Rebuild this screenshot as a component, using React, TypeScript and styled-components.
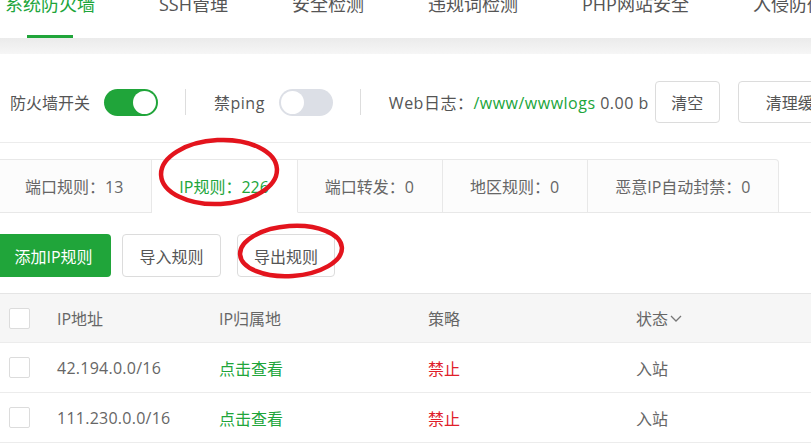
import React from "react";
import styled, { createGlobalStyle } from "styled-components";

const GlobalStyle = createGlobalStyle`
  html, body {
    margin: 0;
    padding: 0;
    background: #ffffff;
    overflow: hidden;
  }
  body {
    font-family: "Open Sans", "Noto Sans CJK SC", sans-serif;
    color: #666;
  }
`;

const topTabs = ["系统防火墙", "SSH管理", "安全检测", "违规词检测", "PHP网站安全", "入侵防御"];

const ruleTabs = [
  { label: "端口规则：13" },
  { label: "IP规则：226", active: true },
  { label: "端口转发：0" },
  { label: "地区规则：0" },
  { label: "恶意IP自动封禁：0" },
];

const rows = [
  { ip: "42.194.0.0/16", area: "点击查看", policy: "禁止", dir: "入站" },
  { ip: "111.230.0.0/16", area: "点击查看", policy: "禁止", dir: "入站" },
];

const App = () => {
  return (
    <Page>
      <GlobalStyle />
      <TopBar>
        <TopTabList>
          {topTabs.map((t, i) => (
            <TopTab key={t} $active={i === 0}>
              {t}
            </TopTab>
          ))}
        </TopTabList>
      </TopBar>
      <Shade />

      <SwitchRow>
        <Label>防火墙开关</Label>
        <Toggle $on />
        <Divider />
        <Label $spacing={0.5}>禁ping</Label>
        <Toggle />
        <Divider />
        <Label $spacing={0.5}>
          Web日志：<Green>/www/wwwlogs</Green> 0.00 b
        </Label>
        <Button $h={42} $w={65}>清空</Button>
        <Button $h={42} $w={120} $ml={18}>清理缓存</Button>
      </SwitchRow>

      <RuleTabs>
        {ruleTabs.map((t) => (
          <RuleTab key={t.label} $active={t.active}>
            {t.label}
          </RuleTab>
        ))}
      </RuleTabs>

      <Actions>
        <PrimaryButton>添加IP规则</PrimaryButton>
        <Button $h={43} $w={99} $ml={11}>导入规则</Button>
        <Button $h={43} $w={98} $ml={16}>导出规则</Button>
      </Actions>

      <Table>
        <HeadRow>
          <Cell>
            <Check />
          </Cell>
          <Cell>IP地址</Cell>
          <Cell>IP归属地</Cell>
          <Cell>策略</Cell>
          <Cell>
            状态
            <svg width="14" height="10" viewBox="0 0 14 10" style={{ marginLeft: 1 }}>
              <polyline points="2,3 7,8 12,3" fill="none" stroke="#777" strokeWidth="1.3" />
            </svg>
          </Cell>
        </HeadRow>
        {rows.map((r) => (
          <BodyRow key={r.ip}>
            <Cell>
              <Check />
            </Cell>
            <Cell $spacing={0.25}>{r.ip}</Cell>
            <Cell $color="#20a53a">{r.area}</Cell>
            <Cell $color="#e0202a">{r.policy}</Cell>
            <Cell>{r.dir}</Cell>
          </BodyRow>
        ))}
      </Table>

      <Marks width="811" height="448" viewBox="0 0 811 448">
        <ellipse cx="219" cy="172" rx="58" ry="32" fill="none" stroke="#e3141d" strokeWidth="4.5" transform="rotate(-3 219 172)" />
        <ellipse cx="291" cy="251" rx="51" ry="25" fill="none" stroke="#e3141d" strokeWidth="4.5" transform="rotate(-4 291 251)" />
      </Marks>
    </Page>
  );
};

export default App;

const Page = styled.div`
  position: relative;
  width: 811px;
  height: 448px;
  overflow: hidden;
  background: #fff;
`;

const TopBar = styled.div`
  height: 38px;
  overflow: hidden;
  background: #fff;
`;

const TopTabList = styled.div`
  display: flex;
  margin-left: -27px;
  margin-top: -8px;
  white-space: nowrap;
`;

const TopTab = styled.div<{ $active?: boolean }>`
  position: relative;
  height: 46px;
  padding: 0 32px;
  font-size: 18px;
  line-height: 24px;
  color: ${(p) => (p.$active ? "#20a53a" : "#555")};

  &::after {
    content: "";
    display: ${(p) => (p.$active ? "block" : "none")};
    position: absolute;
    left: 50%;
    bottom: 0;
    width: 46px;
    height: 3px;
    margin-left: -23px;
    background: #20a53a;
  }
`;

const Shade = styled.div`
  height: 16px;
  background: linear-gradient(#ebebeb, #f6f6f6);
`;

const SwitchRow = styled.div`
  display: flex;
  align-items: center;
  padding: 27px 0 19px 10px;
  border-bottom: 1px solid #ececec;
  white-space: nowrap;
`;

const Label = styled.span<{ $spacing?: number }>`
  font-size: 16px;
  color: #555;
  letter-spacing: ${(p) => p.$spacing ?? 0}px;
`;

const Green = styled.span`
  color: #20a53a;
`;

const Toggle = styled.span<{ $on?: boolean }>`
  position: relative;
  display: inline-block;
  flex: none;
  width: 54px;
  height: 27px;
  margin-left: 14px;
  border-radius: 14px;
  background: ${(p) => (p.$on ? "#20a53a" : "#dcdfe6")};

  &::after {
    content: "";
    position: absolute;
    top: 2px;
    left: ${(p) => (p.$on ? "29px" : "2px")};
    width: 23px;
    height: 23px;
    border-radius: 50%;
    background: #fff;
  }
`;

const Divider = styled.span`
  flex: none;
  width: 1px;
  height: 26px;
  margin: 0 28px 0 27px;
  background: #dddddd;
`;

const Button = styled.span<{ $h: number; $w: number; $ml?: number }>`
  display: inline-flex;
  flex: none;
  align-items: center;
  justify-content: center;
  box-sizing: border-box;
  height: ${(p) => p.$h}px;
  width: ${(p) => p.$w}px;
  margin-left: ${(p) => p.$ml ?? 6}px;
  border: 1px solid #dcdcdc;
  border-radius: 4px;
  background: #fff;
  font-size: 16px;
  color: #555;
`;

const RuleTabs = styled.div`
  display: flex;
  margin-top: 16px;
  margin-left: -2px;
  border-bottom: 1px solid #e8e8e8;
`;

const RuleTab = styled.div<{ $active?: boolean }>`
  display: flex;
  align-items: center;
  height: 52px;
  padding: 0 28px 0 27px;
  margin-bottom: -1px;
  border-top: 1px solid #e8e8e8;
  border-right: 1px solid #e8e8e8;
  border-bottom: 1px solid ${(p) => (p.$active ? "#fff" : "#e8e8e8")};
  background: ${(p) => (p.$active ? "#fff" : "#fcfcfc")};
  font-size: 16px;
  color: ${(p) => (p.$active ? "#20a53a" : "#666")};
  white-space: nowrap;

  &:last-child {
    border-top-right-radius: 4px;
  }
`;

const Actions = styled.div`
  display: flex;
  align-items: center;
  padding: 21px 0 16px;
`;

const PrimaryButton = styled.span`
  display: inline-flex;
  align-items: center;
  justify-content: center;
  height: 43px;
  width: 115px;
  margin-left: -4px;
  border-radius: 4px;
  background: #20a53a;
  color: #fff;
  font-size: 16px;
`;

const Table = styled.div`
  border-top: 1px solid #e5e5e5;
`;

const HeadRow = styled.div`
  display: grid;
  grid-template-columns: 57px 162px 209px 208px 1fr;
  align-items: center;
  height: 48px;
  background: #f6f6f6;
  border-bottom: 1px solid #ececec;
`;

const BodyRow = styled(HeadRow)`
  height: 49px;
  background: #fff;
`;

const Cell = styled.div<{ $color?: string; $spacing?: number }>`
  display: flex;
  align-items: center;
  font-size: 16px;
  color: ${(p) => p.$color ?? "#666"};
  letter-spacing: ${(p) => p.$spacing ?? 0}px;
  white-space: nowrap;
`;

const Check = styled.span`
  display: inline-block;
  box-sizing: border-box;
  width: 21px;
  height: 21px;
  margin-left: 9px;
  border: 1px solid #dcdcdc;
  border-radius: 2px;
  background: #fff;
`;

const Marks = styled.svg`
  position: absolute;
  left: 0;
  top: 0;
  pointer-events: none;
`;
